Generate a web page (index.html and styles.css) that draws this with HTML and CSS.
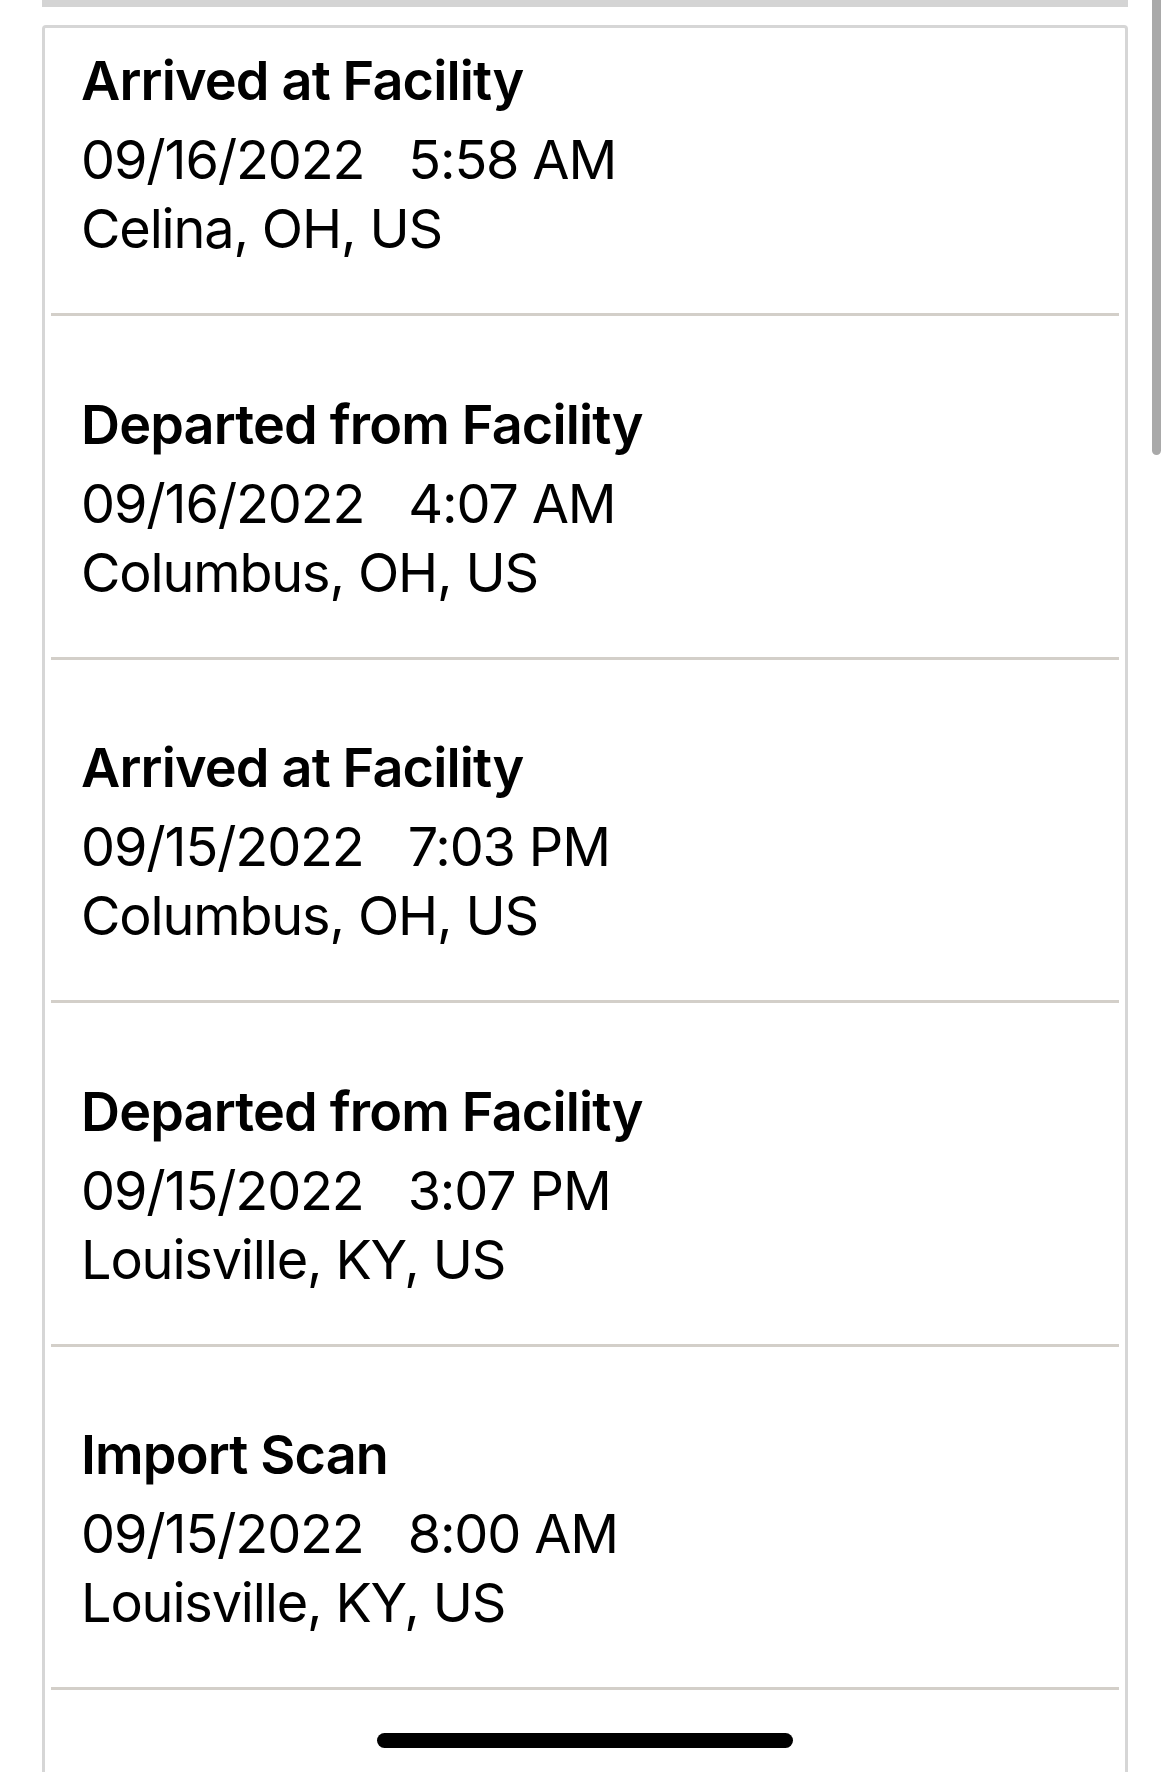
FILE: index.html
```html
<!DOCTYPE html>
<html lang="en">
<head>
<meta charset="utf-8">
<title>Tracking History</title>
<link rel="stylesheet" href="styles.css">
</head>
<body>
<div class="page">
  <div class="topbar"></div>
  <div class="card">
    <div class="event first">
      <div class="title">Arrived at Facility</div>
      <div class="line"><span class="date">09/16/2022</span><span class="time">5:58 AM</span></div>
      <div class="line">Celina, OH, US</div>
    </div>
    <div class="event">
      <div class="title">Departed from Facility</div>
      <div class="line"><span class="date">09/16/2022</span><span class="time">4:07 AM</span></div>
      <div class="line">Columbus, OH, US</div>
    </div>
    <div class="event">
      <div class="title">Arrived at Facility</div>
      <div class="line"><span class="date">09/15/2022</span><span class="time">7:03 PM</span></div>
      <div class="line">Columbus, OH, US</div>
    </div>
    <div class="event">
      <div class="title">Departed from Facility</div>
      <div class="line"><span class="date">09/15/2022</span><span class="time">3:07 PM</span></div>
      <div class="line">Louisville, KY, US</div>
    </div>
    <div class="event">
      <div class="title">Import Scan</div>
      <div class="line"><span class="date">09/15/2022</span><span class="time">8:00 AM</span></div>
      <div class="line">Louisville, KY, US</div>
    </div>
    <div class="tail"></div>
  </div>
</div>
<div class="scrollbar"></div>
<div class="home-indicator"></div>
</body>
</html>
```

FILE: styles.css
```css
html, body {
  margin: 0;
  padding: 0;
  background: #ffffff;
  overflow: hidden;
}

body {
  width: 1170px;
  height: 1772px;
  font-family: Inter, "Noto Sans", "Liberation Sans", sans-serif;
  color: #000000;
}

.page {
  padding-left: 42px;
  width: 1086px;
}

.topbar {
  height: 7px;
  background: #d4d4d4;
}

.card {
  margin-top: 18px;
  border: 3px solid #d6d6d6;
  border-bottom: none;
  border-radius: 4px 4px 0 0;
  background: #ffffff;
}

.event {
  margin: 0 6px;
  padding: 73.5px 0 50px 30px;
  border-bottom: 3px solid #d3cfc9;
}

.event.first {
  padding-top: 18px;
}

.title {
  font-size: 54px;
  font-weight: 600;
  line-height: 69px;
  letter-spacing: -0.85px;
  margin-bottom: 10px;
  white-space: nowrap;
}

.line {
  font-size: 54px;
  font-weight: 400;
  line-height: 69px;
  letter-spacing: -1.15px;
  white-space: nowrap;
}

.time {
  margin-left: 44px;
}

.tail {
  height: 90px;
}

.scrollbar {
  position: absolute;
  left: 1152px;
  top: -10px;
  width: 9px;
  height: 465px;
  border-radius: 5px;
  background: #a9a9a9;
}

.home-indicator {
  position: absolute;
  left: 377px;
  top: 1733px;
  width: 416px;
  height: 15px;
  border-radius: 8px;
  background: #000000;
}
```
